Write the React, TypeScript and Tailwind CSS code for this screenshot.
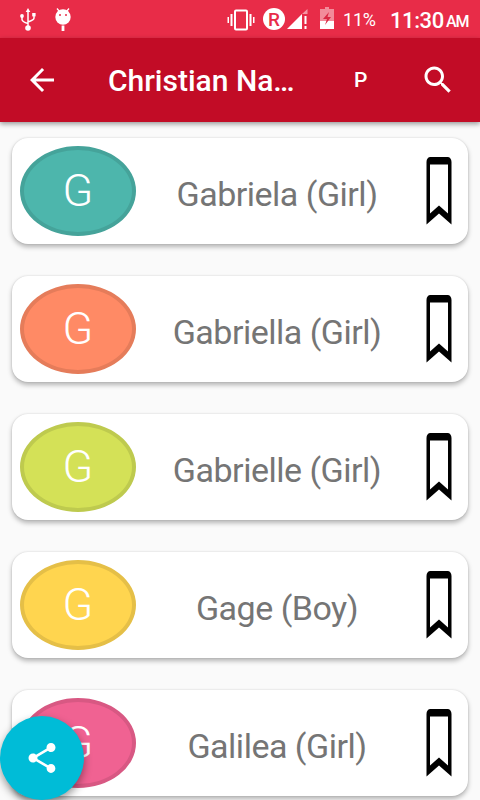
import { clsx } from "clsx";

const names = [
  { name: "Gabriela (Girl)", color: "bg-[#4db6ac] border-[#45a39a]" },
  { name: "Gabriella (Girl)", color: "bg-[#ff8a65] border-[#e57c5a]" },
  { name: "Gabrielle (Girl)", color: "bg-[#d4e157] border-[#beca4e]" },
  { name: "Gage (Boy)", color: "bg-[#ffd54f] border-[#e5bf47]" },
  { name: "Galilea (Girl)", color: "bg-[#f06292] border-[#d85883]" },
];

const UsbIcon = () => (
  <svg className="h-6 w-4" viewBox="0 0 16 24" fill="none" stroke="white" strokeWidth="1.5">
    <path d="M8 3v17M2 8v3.5c0 1.5 1 2.5 6 4M14 7v3c0 2-2 2.5-6 4" />
    <path d="M8 0l2.3 4H5.7z" fill="white" stroke="none" />
    <circle cx="2" cy="8" r="1.9" fill="white" stroke="none" />
    <path d="M12.2 5h3.4v3.4h-3.4z" fill="white" stroke="none" />
    <circle cx="8" cy="20" r="2.8" fill="white" stroke="none" />
  </svg>
);

const DebugIcon = () => (
  <svg className="h-6 w-4" viewBox="0 0 16 24">
    <path d="M2 .5l2.5 3M14 .5l-2.5 3" stroke="white" strokeWidth="1.3" />
    <circle cx="8" cy="9" r="7.7" fill="white" />
    <path d="M6.6 17.5h2.8V23H6.6z" fill="white" />
    <circle cx="5" cy="7" r="1" fill="#e82c48" />
    <circle cx="11" cy="7" r="1" fill="#e82c48" />
  </svg>
);

const VibrateIcon = () => (
  <svg className="h-[22px] w-7" viewBox="0 0 28 22" fill="none" stroke="white">
    <rect x="8" y="1.5" width="12" height="19" rx="1" strokeWidth="2" />
    <path d="M4.5 5v12M23.5 5v12" strokeWidth="2" />
    <path d="M1.25 8v6M26.75 8v6" strokeWidth="1.5" />
  </svg>
);

const SignalIcon = () => (
  <svg className="h-5 w-[21px]" viewBox="0 0 21 20" fill="white">
    <path d="M0 20L15 5v15z" />
    <path d="M15 5l5.5-5v5z" opacity=".5" />
    <path d="M17.5 7h2v8h-2zM17.5 17h2v3h-2z" />
  </svg>
);

const BatteryIcon = () => (
  <svg className="h-[22px] w-3.5" viewBox="0 0 14 22">
    <path d="M5 0h4v2h5v20H0V2h5z" fill="white" opacity=".45" />
    <path d="M0 14h14v8H0z" fill="white" />
    <path d="M9 5l-6 7h4l-2 6 6-8H7.5z" fill="#d92843" />
  </svg>
);

const BookmarkIcon = () => (
  <svg className="h-[68px] w-[26px]" viewBox="0 0 26 68">
    <path
      fillRule="evenodd"
      d="M.5 67.5V5C.5 2 2 0 4.5 0h17c2.5 0 4 2 4 5v62.5L13 56.5zM4 7.5v49L13 48.5l9 8v-49z"
    />
  </svg>
);

const StatusBar = () => (
  <div className="flex h-[38px] items-center bg-[#e82c48] text-white">
    <div className="ml-5 mt-0.5 flex gap-[19px]">
      <UsbIcon />
      <DebugIcon />
    </div>
    <div className="ml-[156px] flex h-full items-center">
      <div className="mt-0.5"><VibrateIcon /></div>
      <div className="ml-2 flex size-[22px] items-center justify-center rounded-full bg-white text-[19px] leading-none font-medium text-[#e82c48]">
        R
      </div>
      <div className="ml-0.5"><SignalIcon /></div>
      <div className="mb-0.5 ml-3"><BatteryIcon /></div>
      <span className="ml-[9px] w-[47px] text-[18px] tracking-[-0.2px]">11%</span>
      <span className="mt-0.5 w-14 text-[22px] font-medium tracking-[-0.4px]">11:30</span>
      <span className="mt-1.5 text-[16px] font-medium tracking-[-1px]">AM</span>
    </div>
  </div>
);

const AppBar = () => (
  <header className="relative flex h-[84px] items-center bg-[#c20c26] text-white shadow-[0_2px_5px_rgba(0,0,0,0.4)]">
    <svg className="ml-6 size-9" viewBox="0 0 24 24" fill="white">
      <path d="M20 11H7.83l5.59-5.59L12 4l-8 8 8 8 1.41-1.41L7.83 13H20v-2z" />
    </svg>
    <h1 className="mt-0.5 ml-12 w-[246px] text-[30px] leading-9 font-medium">Christian Na…</h1>
    <span className="mt-0.5 w-[66px] text-[21px] font-medium">P</span>
    <svg className="size-9" viewBox="0 0 24 24" fill="white">
      <path d="M15.5 14h-.79l-.28-.27C15.41 12.59 16 11.11 16 9.5 16 5.91 13.09 3 9.5 3S3 5.91 3 9.5 5.91 16 9.5 16c1.61 0 3.09-.59 4.23-1.57l.27.28v.79l5 4.99L20.49 19l-4.99-5zm-6 0C7.01 14 5 11.99 5 9.5S7.01 5 9.5 5 14 7.01 14 9.5 11.99 14 9.5 14z" />
    </svg>
  </header>
);

const NameCard = ({ name, color }: { name: string; color: string }) => (
  <li className="flex h-[106px] shrink-0 items-center rounded-2xl bg-white px-2 shadow-[0_3px_5px_rgba(0,0,0,0.28),0_0_2px_rgba(0,0,0,0.14)]">
    <div
      className={clsx(
        "flex h-[90px] w-[116px] items-center justify-center rounded-[50%] border-4 text-[45px] font-light text-white",
        color,
      )}
    >
      G
    </div>
    <span className="mt-1.5 w-[282px] text-center text-[34px] leading-10 tracking-[-0.5px] text-[#757575]">
      {name}
    </span>
    <div className="ml-2">
      <BookmarkIcon />
    </div>
  </li>
);

export default function App() {
  return (
    <div className="relative flex h-[800px] w-[480px] flex-col overflow-hidden bg-[#fafafa] font-[Roboto,sans-serif]">
      <StatusBar />
      <AppBar />
      <ul className="flex flex-col gap-8 px-3 pt-4">
        {names.map((item) => (
          <NameCard key={item.name} {...item} />
        ))}
      </ul>

      {/* Share button */}
      <button className="absolute bottom-0 left-0 flex size-[84px] items-center justify-center rounded-full bg-[#00bcd7] shadow-[0_4px_8px_rgba(0,0,0,0.4)]">
        <svg className="size-9" viewBox="0 0 24 24" fill="white">
          <path d="M18 16.08c-.76 0-1.44.3-1.96.77L8.91 12.7c.05-.23.09-.46.09-.7s-.04-.47-.09-.7l7.05-4.11c.54.5 1.25.81 2.04.81 1.66 0 3-1.34 3-3s-1.34-3-3-3-3 1.34-3 3c0 .24.04.47.09.7L8.04 9.81C7.5 9.31 6.79 9 6 9c-1.66 0-3 1.34-3 3s1.34 3 3 3c.79 0 1.5-.31 2.04-.81l7.12 4.16c-.05.21-.08.43-.08.65 0 1.61 1.31 2.92 2.92 2.92 1.61 0 2.92-1.31 2.92-2.92s-1.31-2.92-2.92-2.92z" />
        </svg>
      </button>
    </div>
  );
}
